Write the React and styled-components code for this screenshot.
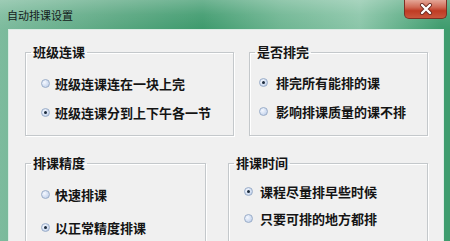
import React from 'react'
import styled, { createGlobalStyle } from 'styled-components'

const GlobalStyle = createGlobalStyle`
  body {
    margin: 0;
    overflow: hidden;
    background: #5fa984;
  }
`

const Window = styled.div`
  width: 450px;
  height: 241px;
  display: flex;
  flex-direction: column;
  overflow: hidden;
  background:
    linear-gradient(90deg, #7dbb9d 0%, #5aa781 25%, #3e9a6d 45%, #6db591 62%, #8bc6a9 80%, #3f9c6e 98%);
  font-family: "Noto Sans CJK SC", "Noto Sans", sans-serif;
`

const TitleBar = styled.div`
  height: 29px;
  flex: none;
  display: flex;
  justify-content: space-between;
  align-items: flex-start;
  padding-left: 7px;
  padding-right: 3px;
  background: linear-gradient(180deg, rgba(255,255,255,0.25) 0%, rgba(255,255,255,0.08) 50%, rgba(0,0,0,0) 100%);
`

const Title = styled.span`
  margin-top: 8px;
  font-size: 11px;
  line-height: 15px;
  color: #14201b;
`

const CloseButton = styled.div`
  width: 43px;
  height: 19px;
  box-sizing: border-box;
  border: 1px solid #7c3024;
  border-top: none;
  border-radius: 0 0 5px 5px;
  background: linear-gradient(180deg, #e4a797 0%, #d06a55 40%, #bf3b24 60%, #c9563c 100%);
  display: flex;
  align-items: center;
  justify-content: center;
`

const Frame = styled.div`
  flex: 1;
  display: flex;
  padding: 0 6px 0 8px;
`

const Client = styled.div`
  flex: 1;
  background: #f0f0f0;
  border: 1px solid #dcece4;
  border-bottom: none;
  padding: 14px 0 0 16px;
  display: flex;
  flex-direction: column;
  gap: 19px;
`

const Row = styled.div`
  display: flex;
  gap: ${p => p.$gap}px;
`

const Group = styled.fieldset`
  box-sizing: border-box;
  width: ${p => p.$width}px;
  margin: 0;
  padding: ${p => p.$padTop}px 0 13px ${p => p.$padLeft}px;
  border: 1px solid #c4c8cb;
  box-shadow: inset 1px 1px 0 #ffffff, 1px 1px 0 #ffffff;
  display: flex;
  flex-direction: column;
  gap: ${p => p.$gap}px;
  min-inline-size: 0;
`

const Legend = styled.legend`
  margin-left: ${p => 5 - p.$padLeft}px;
  padding: 0 2px;
  font-size: 13px;
  line-height: 16px;
  font-weight: 700;
  color: #141414;
`

const Option = styled.label`
  display: flex;
  align-items: center;
  gap: ${p => p.$gap}px;
  height: 20px;
  font-size: 13px;
  font-weight: 700;
  color: #141414;
  white-space: nowrap;
`

const Radio = styled.span`
  width: 9px;
  height: 9px;
  box-sizing: border-box;
  border-radius: 50%;
  border: 1px solid #9aadc8;
  background: radial-gradient(circle at 35% 35%, #f4f8ff 0%, #d0dcf0 60%, #b0c3e2 100%);
  display: flex;
  align-items: center;
  justify-content: center;
  flex: none;

  &::after {
    content: '';
    width: 3px;
    height: 3px;
    border-radius: 50%;
    background: ${p => (p.$checked ? '#1b2a3c' : 'transparent')};
  }
`

const CloseIcon = () => (
  <svg width="14" height="12" viewBox="0 0 14 12">
    <path d="M3 2 L11 10 M11 2 L3 10" stroke="#6b2a20" strokeWidth="4" strokeLinecap="round" />
    <path d="M3 2 L11 10 M11 2 L3 10" stroke="#ffffff" strokeWidth="2.4" strokeLinecap="round" />
  </svg>
)

const groups = [
  [
    { title: '班级连课', width: 209, padTop: 13, padLeft: 15, gap: 9, textGap: 5,
      options: [['班级连课连在一块上完', false], ['班级连课分到上下午各一节', true]] },
    { title: '是否排完', width: 179, padTop: 12, padLeft: 9, gap: 9, textGap: 8,
      options: [['排完所有能排的课', true], ['影响排课质量的课不排', false]] },
  ],
  [
    { title: '排课精度', width: 181, padTop: 13, padLeft: 15, gap: 13, textGap: 5,
      options: [['快速排课', false], ['以正常精度排课', true]] },
    { title: '排课时间', width: 200, padTop: 10, padLeft: 15, gap: 7, textGap: 7,
      options: [['课程尽量排早些时候', true], ['只要可排的地方都排', false]] },
  ],
]

const rowGaps = [15, 22]

export default function App() {
  return (
    <>
      <GlobalStyle />
      <Window>
        <TitleBar>
          <Title>自动排课设置</Title>
          <CloseButton>
            <CloseIcon />
          </CloseButton>
        </TitleBar>
        <Frame>
          <Client>
            {groups.map((row, i) => (
              <Row key={i} $gap={rowGaps[i]}>
                {row.map(g => (
                  <Group key={g.title} $width={g.width} $padTop={g.padTop} $padLeft={g.padLeft} $gap={g.gap}>
                    <Legend $padLeft={g.padLeft}>{g.title}</Legend>
                    {g.options.map(([text, checked]) => (
                      <Option key={text} $gap={g.textGap}>
                        <Radio $checked={checked} />
                        {text}
                      </Option>
                    ))}
                  </Group>
                ))}
              </Row>
            ))}
          </Client>
        </Frame>
      </Window>
    </>
  )
}
